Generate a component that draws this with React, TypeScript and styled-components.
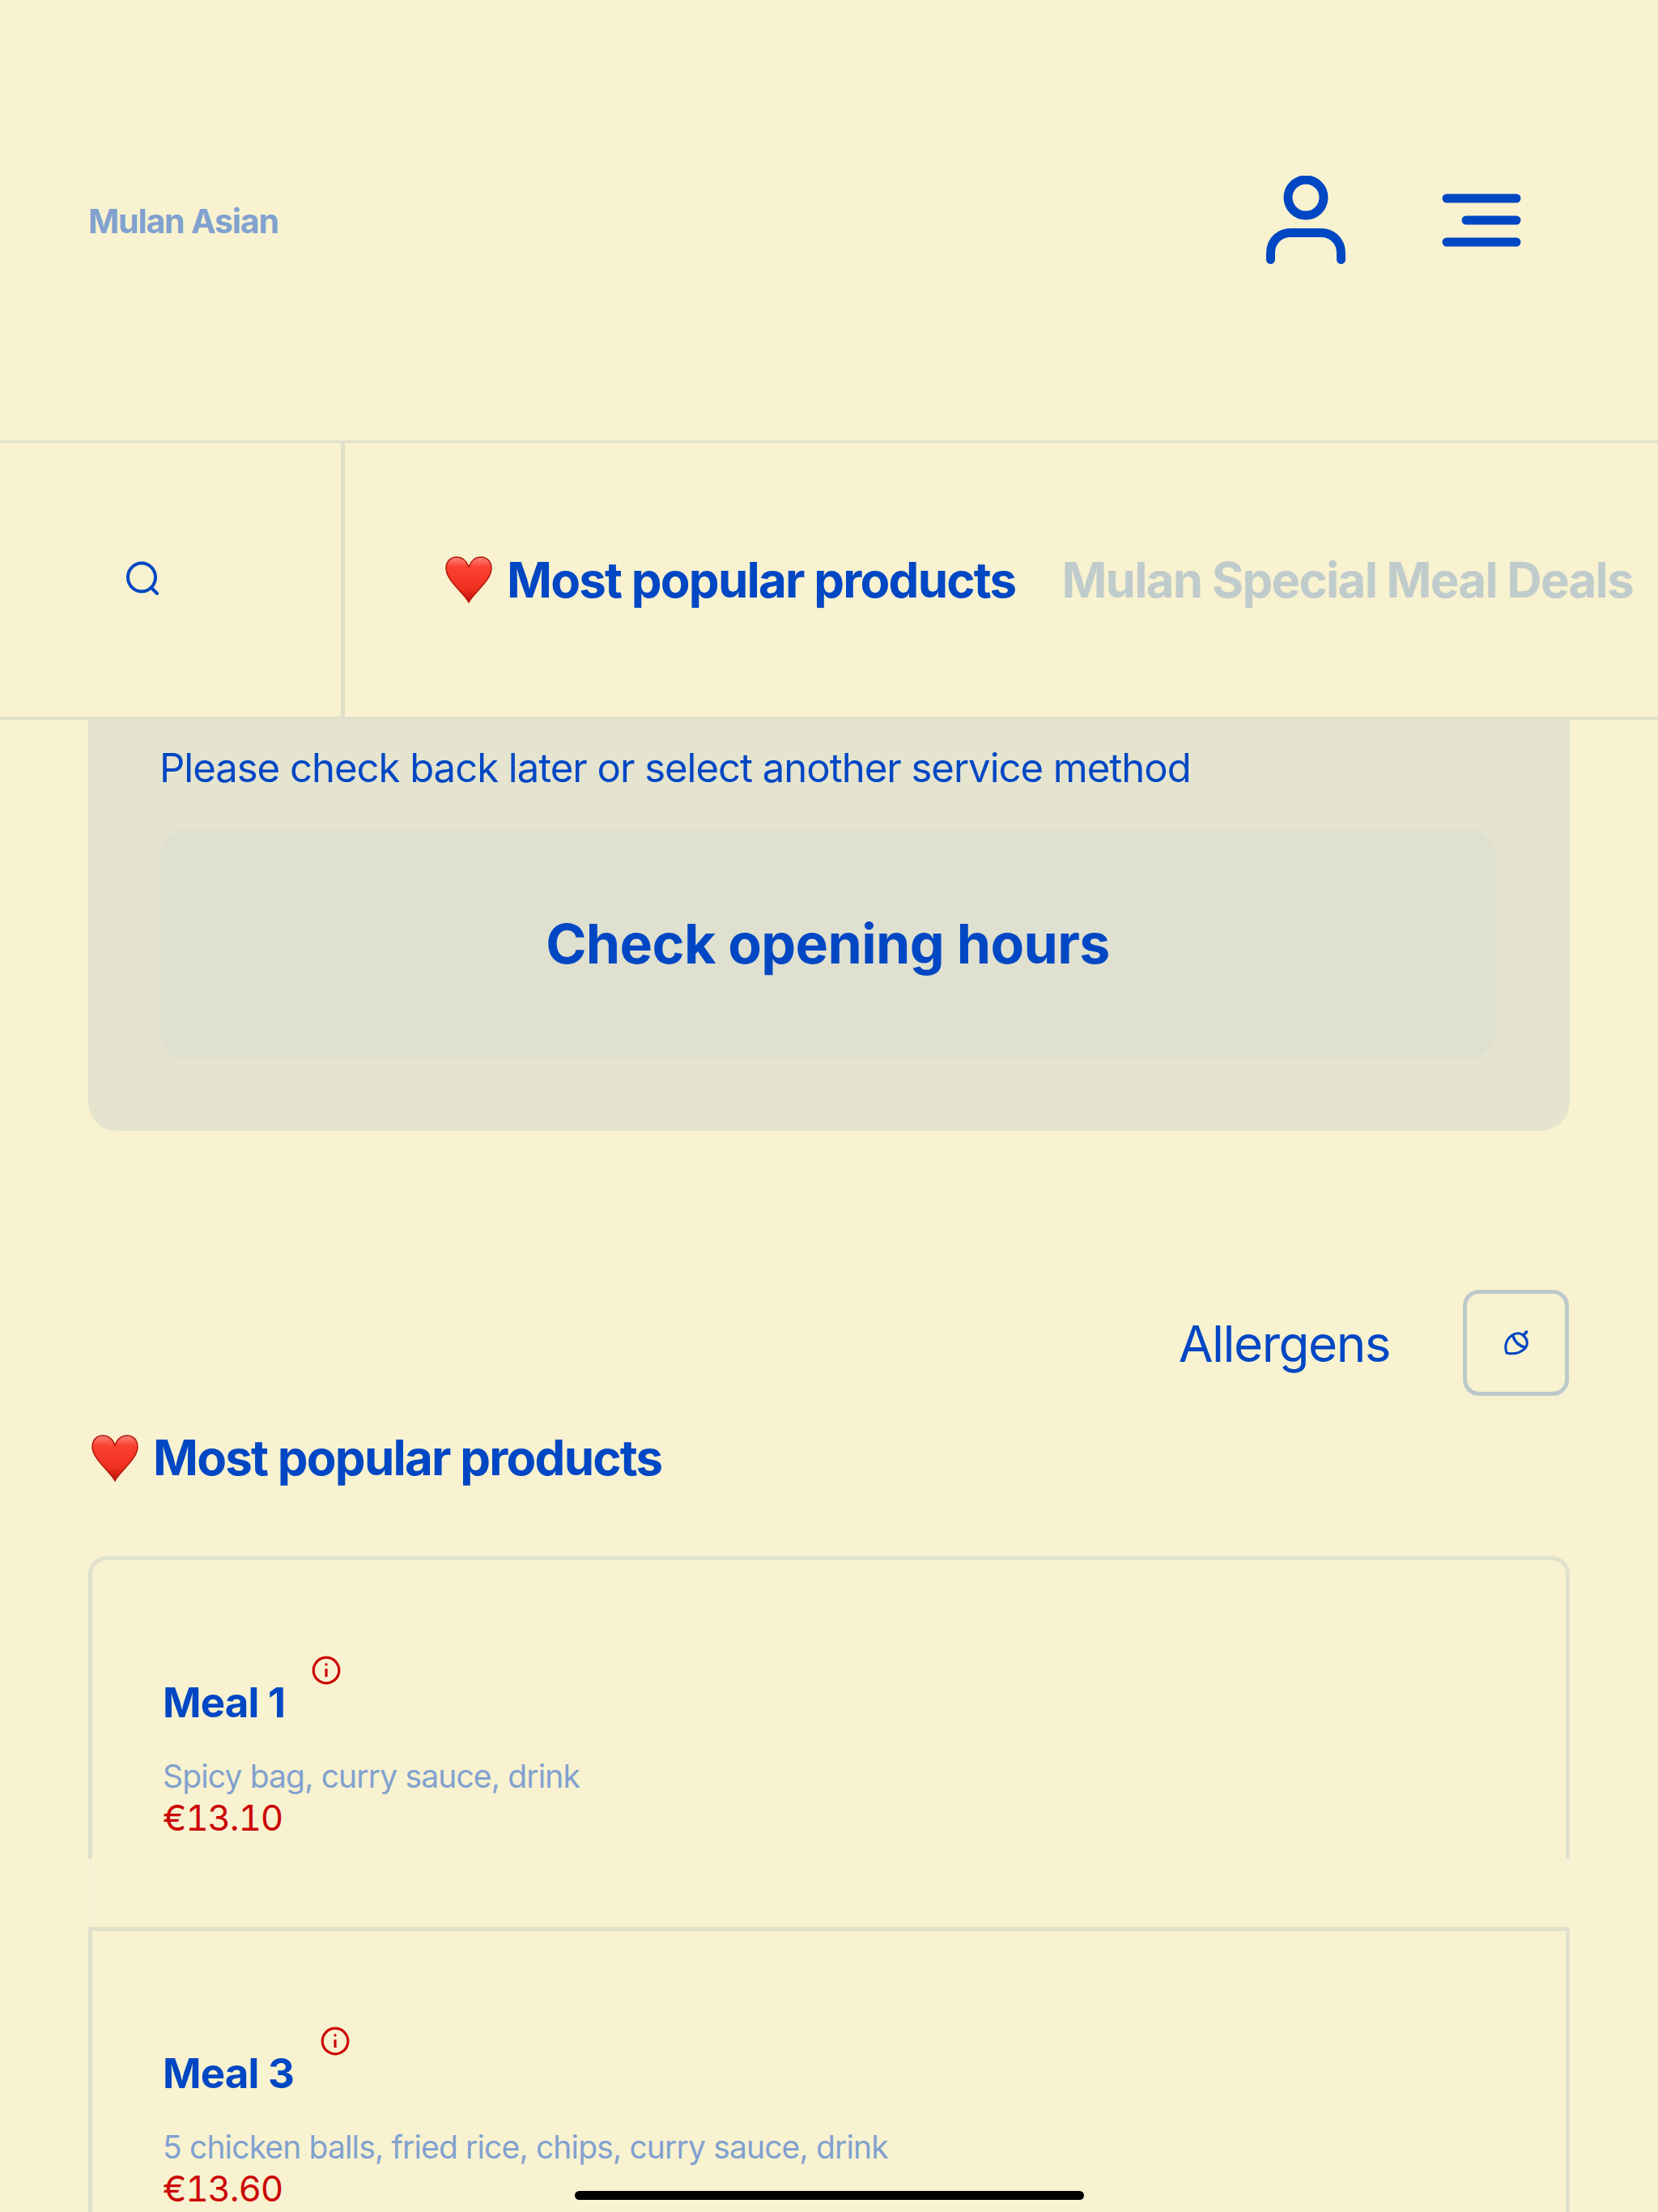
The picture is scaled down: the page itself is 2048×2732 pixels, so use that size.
import React from 'react';
import styled, { createGlobalStyle } from 'styled-components';

const BLUE = '#0047c4';
const MUTED = '#81a1cf';
const RED = '#cc0606';
const LINE = '#e0e0cc';
const FONT = `Inter, "Noto Sans", "Liberation Sans", sans-serif`;

const GlobalStyle = createGlobalStyle`
    html,
    body {
        margin: 0;
        background: #f8f2d0;
    }
`;

const Page = styled.div`
    position: relative;
    width: 2048px;
    height: 2732px;
    overflow: hidden;
    background: #f8f2d0;
    font-family: ${FONT};
    color: ${BLUE};
`;

const Header = styled.header`
    display: flex;
    align-items: center;
    justify-content: space-between;
    box-sizing: border-box;
    height: 547px;
    padding: 0 169px 0 109px;
    border-bottom: 3px solid ${LINE};
`;

const Brand = styled.div`
    padding-top: 2px;
    font-size: 41px;
    font-weight: 700;
    letter-spacing: -1.15px;
    color: ${MUTED};
`;

const HeaderIcons = styled.div`
    display: flex;
    align-items: center;
    gap: 117px;
`;

const Nav = styled.nav`
    display: flex;
    box-sizing: border-box;
    height: 342px;
    border-bottom: 4px solid ${LINE};
`;

const SearchCell = styled.div`
    flex: 0 0 426px;
    box-sizing: border-box;
    display: flex;
    align-items: center;
    padding: 0 0 4px 155px;
    border-right: 5px solid ${LINE};
`;

const Tabs = styled.div`
    display: flex;
    align-items: center;
    gap: 57px;
    padding-left: 124px;
    overflow: hidden;
    white-space: nowrap;
`;

const Tab = styled.div<{ $active?: boolean }>`
    display: flex;
    align-items: center;
    gap: 18px;
    font-size: 60px;
    font-weight: 700;
    letter-spacing: -1.75px;
    color: ${props => (props.$active ? BLUE : '#c0cbcc')};
`;

const Main = styled.main`
    padding: 0 109px;
`;

const ClosedPanel = styled.section`
    box-sizing: border-box;
    padding: 0 91px 88px 88px;
    background: #e4e4cf;
    border-radius: 0 0 36px 36px;
`;

const ClosedText = styled.div`
    height: 134px;
    line-height: 120px;
    font-size: 49px;
    letter-spacing: -1px;
`;

const HoursButton = styled.div`
    display: flex;
    align-items: center;
    justify-content: center;
    height: 286px;
    padding-bottom: 2px;
    box-sizing: border-box;
    border-radius: 36px;
    background: #dfe0cf;
    font-size: 68px;
    font-weight: 700;
    letter-spacing: -0.6px;
`;

const AllergenRow = styled.div`
    display: flex;
    align-items: center;
    justify-content: flex-end;
    gap: 90px;
    margin: 196px 1px 0 0;
`;

const AllergenLabel = styled.span`
    padding-top: 2px;
    font-size: 62px;
    letter-spacing: -1.5px;
`;

const AllergenBox = styled.div`
    display: flex;
    align-items: center;
    justify-content: center;
    box-sizing: border-box;
    width: 131px;
    height: 131px;
    border: 5px solid #bcc9cb;
    border-radius: 20px;
`;

const SectionTitle = styled.h2`
    display: flex;
    align-items: center;
    gap: 18px;
    height: 64px;
    margin: 44px 0 90px 4px;
    font-size: 60px;
    font-weight: 700;
    letter-spacing: -1.75px;

    svg {
        margin-top: 2px;
    }
`;

const Card = styled.article<{ $first?: boolean }>`
    box-sizing: border-box;
    height: ${props => (props.$first ? '374px' : '352px')};
    padding: 118px 0 0 87px;
    border: 5px solid ${LINE};
    border-bottom: 0;
    border-radius: ${props => (props.$first ? '22px 22px 0 0' : '0')};
`;

const FadedGap = styled.div`
    box-sizing: border-box;
    height: 84px;
    border: solid #f7f2d6;
    border-width: 0 5px;
`;

const TitleRow = styled.div`
    display: flex;
    align-items: flex-start;
    gap: 33px;
`;

const MealTitle = styled.h3`
    margin: 28px 0 0;
    font-size: 51px;
    line-height: 60px;
    font-weight: 700;
    letter-spacing: -0.8px;
`;

const Description = styled.div`
    margin-top: 35px;
    font-size: 39px;
    line-height: 52px;
    letter-spacing: -0.85px;
    color: ${MUTED};
`;

const Price = styled.div`
    margin-top: -1px;
    font-size: 44px;
    line-height: 52px;
    letter-spacing: -1.2px;
    font-variant-numeric: tabular-nums;
    color: ${RED};
`;

const HomeIndicator = styled.div`
    position: absolute;
    left: 710px;
    bottom: 15px;
    width: 629px;
    height: 11px;
    border-radius: 6px;
    background: #000;
`;

const Heart = () => (
    <svg width="58" height="58" viewBox="0 0 58 58">
        <defs>
            <linearGradient id="heartFill" x1="0" y1="0" x2="0" y2="1">
                <stop offset="0" stopColor="#f8877a" />
                <stop offset="0.22" stopColor="#fb4032" />
                <stop offset="0.7" stopColor="#f0301f" />
                <stop offset="1" stopColor="#b81006" />
            </linearGradient>
        </defs>
        <path
            d="M29 57C24 46 1 30 1 15C1 6 7 1 14 1C21 1 26 5 29 13C32 5 37 1 44 1C51 1 57 6 57 15C57 30 34 46 29 57Z"
            fill="url(#heartFill)"
            stroke="#b5170b"
            strokeWidth="1.5"
        />
    </svg>
);

const UserIcon = () => (
    <svg width="100" height="110" viewBox="0 0 100 110" fill="none" stroke={BLUE} strokeWidth="11" strokeLinecap="round">
        <circle cx="49" cy="27" r="22" />
        <path d="M5.5 103.5V96C5.5 79 18 70.5 30 70.5H68C80 70.5 92.5 79 92.5 96V103.5" />
    </svg>
);

const MenuIcon = () => (
    <svg width="98" height="66" viewBox="0 0 98 66" fill="none" stroke={BLUE} strokeWidth="11" strokeLinecap="round">
        <path d="M6 6H92M30 33H92M6 60H92" />
    </svg>
);

const SearchIcon = () => (
    <svg width="42" height="42" viewBox="0 0 42 42" fill="none" stroke={BLUE} strokeWidth="4" strokeLinecap="round">
        <ellipse cx="20" cy="20" rx="17" ry="17.5" />
        <path d="M32 33L39 40" />
    </svg>
);

const AcornIcon = () => (
    <svg width="34" height="34" viewBox="110 70 100 100" fill="none" stroke={BLUE} strokeWidth="9" strokeLinecap="round">
        <path d="M125 155C115 130 125 100 150 88C165 80 180 85 188 95C200 105 205 125 190 140C170 158 145 160 125 155Z" />
        <path d="M148 95C155 115 170 130 192 135" strokeWidth="11" />
        <path d="M187 90L197 79" strokeWidth="11" />
    </svg>
);

const InfoIcon = () => (
    <svg width="36" height="36" viewBox="0 0 36 36" fill="none" stroke={RED} strokeWidth="3.2">
        <circle cx="18" cy="18" r="15.8" />
        <path d="M18 16V26" />
        <circle cx="18" cy="10.8" r="1.2" fill={RED} strokeWidth="1" />
    </svg>
);

const App = () => (
    <Page>
        <GlobalStyle />
        <Header>
            <Brand>Mulan Asian</Brand>
            <HeaderIcons>
                <UserIcon />
                <MenuIcon />
            </HeaderIcons>
        </Header>
        <Nav>
            <SearchCell>
                <SearchIcon />
            </SearchCell>
            <Tabs>
                <Tab $active>
                    <Heart />
                    Most popular products
                </Tab>
                <Tab>Mulan Special Meal Deals</Tab>
            </Tabs>
        </Nav>
        <Main>
            <ClosedPanel>
                <ClosedText>Please check back later or select another service method</ClosedText>
                <HoursButton>Check opening hours</HoursButton>
            </ClosedPanel>
            <AllergenRow>
                <AllergenLabel>Allergens</AllergenLabel>
                <AllergenBox>
                    <AcornIcon />
                </AllergenBox>
            </AllergenRow>
            <SectionTitle>
                <Heart />
                Most popular products
            </SectionTitle>
            <Card $first>
                <TitleRow>
                    <MealTitle>Meal 1</MealTitle>
                    <InfoIcon />
                </TitleRow>
                <Description>Spicy bag, curry sauce, drink</Description>
                <Price>€13.10</Price>
            </Card>
            <FadedGap />
            <Card>
                <TitleRow>
                    <MealTitle>Meal 3</MealTitle>
                    <InfoIcon />
                </TitleRow>
                <Description>5 chicken balls, fried rice, chips, curry sauce, drink</Description>
                <Price>€13.60</Price>
            </Card>
        </Main>
        <HomeIndicator />
    </Page>
);

export default App;
